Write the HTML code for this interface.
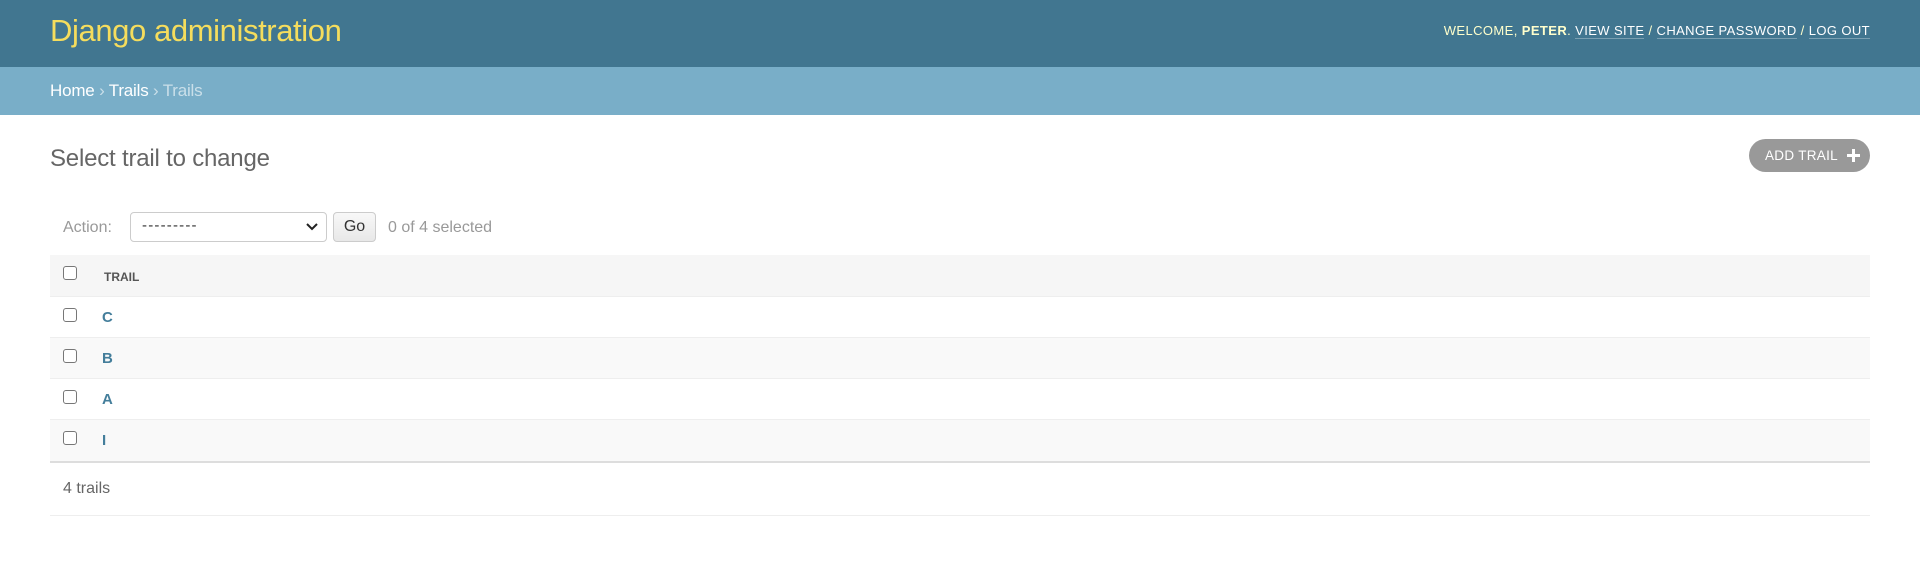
<!DOCTYPE html>
<html><head><meta charset="utf-8">
<style>
*{box-sizing:border-box;margin:0;padding:0}
body{width:1920px;height:564px;background:#fff;font-family:"Liberation Sans",Arial,sans-serif;position:relative;overflow:hidden;color:#333}
.abs{position:absolute}
#header{left:0;top:0;width:1920px;height:67px;background:#417690}
#brand{left:50px;top:11px;font-size:31px;color:#f5dd5d;font-weight:300;letter-spacing:-0.4px;line-height:40px}
#tools{right:50px;top:22px;font-size:13px;color:#ffc;letter-spacing:0.4px;line-height:18px;white-space:nowrap}
#tools a{color:#fff;text-decoration:none;border-bottom:1px solid rgba(255,255,255,0.3)}
#tools b{color:#ffc}
#bc{left:0;top:67px;width:1920px;height:48px;background:#79aec8;padding:13px 50px;font-size:17px;line-height:22px;color:rgba(255,255,255,0.6);letter-spacing:-0.2px}
#bc span{color:#fff}
h1{position:absolute;left:50px;top:143px;font-size:24px;font-weight:300;color:#666;line-height:32px;letter-spacing:-0.2px}
#add{left:1749px;top:139px;width:121px;height:33px;border-radius:17px;background:#999;color:#fff;font-size:13.5px;line-height:33px;padding-left:16px;letter-spacing:0.3px}
#add i{position:absolute;right:10px;top:10px;width:13px;height:13px}
#add i:before{content:"";position:absolute;left:5px;top:0;width:3px;height:13px;background:#fff}
#add i:after{content:"";position:absolute;left:0;top:5px;width:13px;height:3px;background:#fff}
.lbl{font-size:16px;color:#999;line-height:20px}
#sel{left:130px;top:212px;width:197px;height:30px;border:1px solid #ccc;border-radius:4px;background:#fff}
#sel .d{position:absolute;left:11px;top:4px;font-size:15px;letter-spacing:1.2px;color:#333}
#sel svg{position:absolute;right:8px;top:10px}
#go{left:333px;top:212px;width:43px;height:30px;border:1px solid #ccc;border-radius:4px;background:linear-gradient(#f8f8f8,#e8e8e8);font-size:16px;text-align:center;line-height:28px;color:#333}
.row{left:50px;width:1820px;height:41px;border-bottom:1px solid #eee}
.cb{position:absolute;left:13px;top:11px;width:14px;height:14px;border:1px solid #777;border-radius:3px;background:#fff}
.cell{position:absolute;left:52px;font-weight:bold;color:#447e9b;font-size:15px;top:12px}
</style></head><body>
<div id="header" class="abs"></div>
<div id="brand" class="abs">Django administration</div>
<div id="tools" class="abs">WELCOME, <b>PETER</b>. <a>VIEW SITE</a> / <a>CHANGE PASSWORD</a> / <a>LOG OUT</a></div>
<div id="bc" class="abs"><span>Home</span> › <span>Trails</span> › Trails</div>
<h1>Select trail to change</h1>
<div id="add" class="abs">ADD TRAIL<i></i></div>
<div class="abs lbl" style="left:63px;top:218px">Action:</div>
<div id="sel" class="abs"><span class="d">---------</span><svg width="12" height="8" viewBox="0 0 12 8"><path d="M1 1l5 5 5-5" stroke="#222" stroke-width="2" fill="none"/></svg></div>
<div id="go" class="abs">Go</div>
<div class="abs lbl" style="left:388px;top:218px">0 of 4 selected</div>
<div class="abs row" style="top:255px;background:#f6f6f6;height:42px"><div class="cb" style="top:11px"></div><div class="cell" style="color:#555;font-size:12px;top:15px;left:54px">TRAIL</div></div>
<div class="abs row" style="top:297px;background:#fff"><div class="cb"></div><div class="cell">C</div></div>
<div class="abs row" style="top:338px;background:#f9f9f9"><div class="cb"></div><div class="cell">B</div></div>
<div class="abs row" style="top:379px;background:#fff"><div class="cb"></div><div class="cell">A</div></div>
<div class="abs row" style="top:420px;background:#f9f9f9;height:43px;border-bottom:2px solid #ddd"><div class="cb"></div><div class="cell">I</div></div>
<div class="abs" style="left:63px;top:480px;font-size:16px;color:#666">4 trails</div>
<div class="abs" style="left:50px;top:515px;width:1820px;height:1px;background:#eee"></div>
</body></html>
